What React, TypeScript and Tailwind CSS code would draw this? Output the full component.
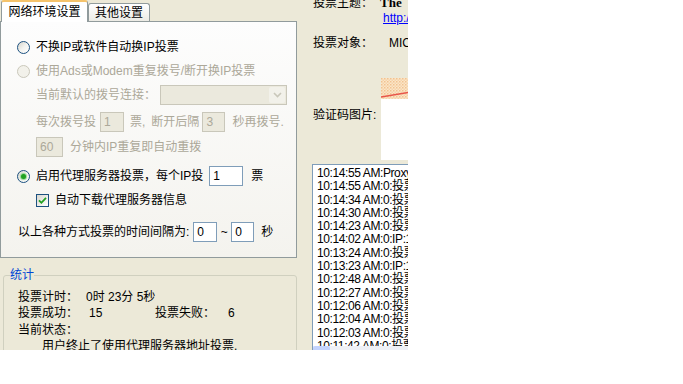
import React from 'react';

const font = "font-['Liberation_Sans','Noto_Sans_CJK_SC',sans-serif]";

const Radio = ({ checked = false, disabled = false }: { checked?: boolean; disabled?: boolean }) => (
  <span
    className={`flex h-[13px] w-[13px] shrink-0 items-center justify-center rounded-full border ${
      disabled
        ? 'border-[#cac8bb] bg-[#f2f1ea]'
        : 'border-[#1c5180] bg-linear-to-br from-[#d4d3cb] via-[#f3f3ef] to-white'
    }`}
  >
    {checked && <span className="h-[5px] w-[5px] rounded-full bg-[#21a121] shadow-[0_0_1px_1px_#8ed88e]" />}
  </span>
);

const Check = () => (
  <span className="flex h-[13px] w-[13px] shrink-0 items-center justify-center border border-[#1c5180] bg-linear-to-br from-[#d8d7cf] to-white">
    <svg width="9" height="9" viewBox="0 0 9 9">
      <path d="M1 4.3 L3.4 6.8 L8 1.8" fill="none" stroke="#21a121" strokeWidth="1.8" />
    </svg>
  </span>
);

const Box = ({ value, w, disabled = false }: { value: string; w: string; disabled?: boolean }) => (
  <span
    className={`flex h-[20px] shrink-0 items-center border px-[3px] ${w} ${
      disabled ? 'border-[#c9c7ba] bg-[#ebe9dd] text-[#aca899]' : 'border-[#7f9db9] bg-white text-black'
    }`}
  >
    {value}
  </span>
);

const logs = [
  '10:14:55 AM:Proxy下载完毕',
  '10:14:55 AM:0:投票成功',
  '10:14:34 AM:0:投票成功',
  '10:14:30 AM:0:投票成功',
  '10:14:23 AM:0:投票失败',
  '10:14:02 AM:0:IP:118.12.4.6',
  '10:13:24 AM:0:投票成功',
  '10:13:23 AM:0:IP:121.33.8.2',
  '10:12:48 AM:0:投票成功',
  '10:12:27 AM:0:投票成功',
  '10:12:06 AM:0:投票失败',
  '10:12:04 AM:0:投票成功',
  '10:12:03 AM:0:投票成功',
  '10:11:42 AM:0:投票成功',
];

export default function App() {
  return (
    <div className="h-[384px] w-[683px] bg-white">
      <div className={`flex h-[350px] w-[408px] overflow-hidden bg-[#ece9d8] text-[12px] leading-[14px] text-black ${font}`}>
        {/* left column */}
        <div className="flex w-[298px] shrink-0 flex-col">
          <div className="flex h-[21px] shrink-0 items-end">
            <div className="relative z-10 mb-[-1px] ml-[1px] flex h-[22px] w-[87px] items-center justify-center rounded-t-[3px] border border-b-0 border-[#919b9c] border-t-2 border-t-[#f5c36b] bg-white">
              网络环境设置
            </div>
            <div className="flex h-[18px] w-[62px] items-center justify-center rounded-t-[3px] border border-b-0 border-[#919b9c] bg-linear-to-b from-white to-[#ecebe5]">
              其他设置
            </div>
          </div>

          <div className="flex h-[237px] w-[297px] shrink-0 flex-col border border-[#919b9c] bg-linear-to-b from-[#fdfdfd] to-[#f4f3ee]">
            <div className="mt-[15px] flex h-[20px] shrink-0 items-center gap-[6px] pl-[16px]">
              <Radio />
              <span>不换IP或软件自动换IP投票</span>
            </div>
            <div className="mt-[4px] flex h-[20px] shrink-0 items-center gap-[6px] pl-[16px] text-[#aca899]">
              <Radio disabled />
              <span>使用Ads或Modem重复拨号/断开换IP投票</span>
            </div>
            <div className="mt-[4px] flex h-[20px] shrink-0 items-center pl-[35px] text-[#aca899]">
              <span className="w-[124px]">当前默认的拨号连接：</span>
              <span className="flex h-[20px] w-[127px] items-center justify-end border border-[#c9c7ba] bg-[#ebe9dd] p-[1px]">
                <span className="flex h-full w-[16px] items-center justify-center rounded-[2px] bg-[#f2f1ea]">
                  <svg width="9" height="6" viewBox="0 0 9 6">
                    <path d="M1 1 L4.5 4.5 L8 1" fill="none" stroke="#c9c7ba" strokeWidth="1.6" />
                  </svg>
                </span>
              </span>
            </div>
            <div className="mt-[7px] flex h-[20px] shrink-0 items-center pl-[35px] text-[#aca899]">
              <span>每次拨号投</span>
              <span className="ml-[4px]">
                <Box value="1" w="w-[24px]" disabled />
              </span>
              <span className="ml-[6px]">票,</span>
              <span className="ml-[6px]">断开后隔</span>
              <span className="ml-[3px]">
                <Box value="3" w="w-[23px]" disabled />
              </span>
              <span className="ml-[7px]">秒再拨号.</span>
            </div>
            <div className="mt-[5px] flex h-[20px] shrink-0 items-center pl-[35px] text-[#aca899]">
              <Box value="60" w="w-[27px]" disabled />
              <span className="ml-[7px]">分钟内IP重复即自动重拨</span>
            </div>
            <div className="mt-[9px] flex h-[20px] shrink-0 items-center pl-[16px]">
              <Radio checked />
              <span className="ml-[6px]">启用代理服务器投票，每个IP投</span>
              <span className="ml-[6px]">
                <Box value="1" w="w-[34px]" />
              </span>
              <span className="ml-[8px]">票</span>
            </div>
            <div className="mt-[4px] flex h-[20px] shrink-0 items-center gap-[6px] pl-[35px]">
              <Check />
              <span>自动下载代理服务器信息</span>
            </div>
            <div className="mt-[12px] flex h-[20px] shrink-0 items-center pl-[17px]">
              <span>以上各种方式投票的时间间隔为:</span>
              <span className="ml-[4px]">
                <Box value="0" w="w-[24px]" />
              </span>
              <span className="mx-[3px] w-[8px] text-center">~</span>
              <Box value="0" w="w-[23px]" />
              <span className="ml-[7px]">秒</span>
            </div>
          </div>

          <fieldset className="mt-[10px] ml-[3px] h-[120px] w-[294px] shrink-0 rounded-[3px] border border-[#d0d0bf]">
            <legend className="ml-[6px] px-0 text-[#0046d5]">统计</legend>
            <div className="flex flex-col pt-[7px] pl-[14px]">
              <div className="flex h-[16px] shrink-0 items-center">
                <span className="w-[68px]">投票计时：</span>
                <span>0时 23分 5秒</span>
              </div>
              <div className="flex h-[16px] shrink-0 items-center">
                <span className="w-[71px]">投票成功：</span>
                <span className="w-[66px]">15</span>
                <span className="w-[73px]">投票失败：</span>
                <span>6</span>
              </div>
              <div className="mt-[1px] flex h-[16px] shrink-0 items-center">
                <span>当前状态：</span>
              </div>
              <div className="flex h-[16px] shrink-0 items-center pl-[24px]">
                <span>用户终止了使用代理服务器地址投票.</span>
              </div>
            </div>
          </fieldset>
        </div>

        {/* right column */}
        <div className="flex min-w-0 flex-1 flex-col pl-[15px]">
          <div className="mt-[-4px] flex h-[14px] shrink-0 items-center whitespace-nowrap">
            <span className="w-[60px] shrink-0">投票主题：</span>
            <span className="ml-[7px] font-['Liberation_Serif',serif] text-[13px] font-bold">The</span>
          </div>
          <div className="mt-[1px] flex h-[14px] shrink-0 items-center whitespace-nowrap pl-[70px]">
            <span className="text-[#0000ff] underline">http://</span>
          </div>
          <div className="mt-[11px] flex h-[14px] shrink-0 items-center whitespace-nowrap">
            <span className="w-[60px] shrink-0">投票对象：</span>
            <span className="ml-[16px]">MICROSOFT</span>
          </div>
          <div className="mt-[28px] flex h-[82px] shrink-0 items-start whitespace-nowrap">
            <span className="mt-[30px] w-[68px] shrink-0">验证码图片:</span>
            <svg width="60" height="82" viewBox="0 0 60 82" className="shrink-0">
              <defs>
                <pattern id="dots" width="3" height="3" patternUnits="userSpaceOnUse">
                  <rect width="3" height="3" fill="#fbe6c8" />
                  <rect width="1.5" height="1.5" fill="#f2c291" />
                  <rect x="1.5" y="1.5" width="1.5" height="1.5" fill="#f6d3aa" />
                </pattern>
              </defs>
              <rect width="60" height="82" fill="#ffffff" />
              <rect width="60" height="21" fill="url(#dots)" />
              <path d="M0 19 L60 9" stroke="#e8564a" strokeWidth="1.6" />
            </svg>
          </div>
          <div className="mt-[4px] ml-[-1px] flex h-[200px] w-[200px] shrink-0 flex-col border border-[#7f9db9] bg-white">
            <div className="flex-1 overflow-hidden pt-[2px] pl-[4px] font-['Liberation_Sans','Noto_Sans_CJK_SC',sans-serif] text-[12px] leading-[13.3px] tracking-[-0.4px] whitespace-nowrap">
              {logs.map((l, i) => (
                <div key={i}>{l}</div>
              ))}
            </div>
            <div className="flex h-[17px] shrink-0 bg-[#eef0f6]">
              <span className="h-full w-[17px] rounded-[2px] bg-[#c3d3fd]" />
            </div>
          </div>
        </div>
      </div>
    </div>
  );
}
